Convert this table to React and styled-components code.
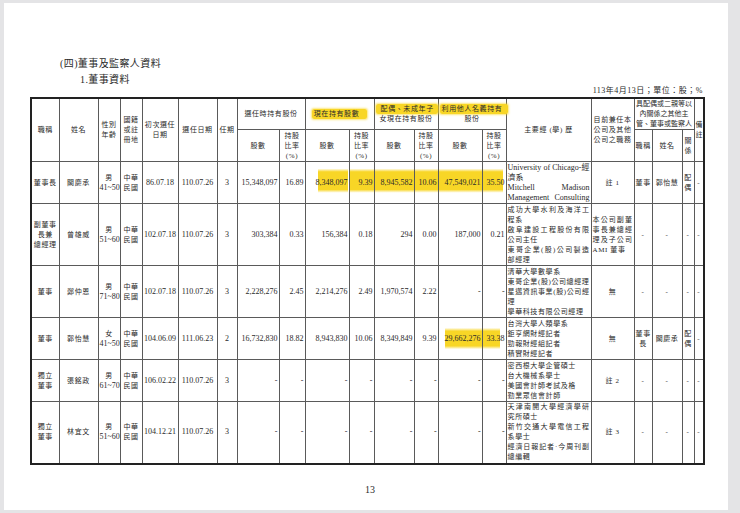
import React from "react";
import styled, { createGlobalStyle, css } from "styled-components";

const YELLOW = "#f8d626";

const GlobalStyle = createGlobalStyle`
  html, body {
    margin: 0;
    padding: 0;
    background: #e4e4e6;
  }
  body {
    font-family: "Liberation Serif", "Noto Sans CJK TC", serif;
    color: #2a2a2a;
  }
`;

const Sheet = styled.div`
  width: 724px;
  height: 507px;
  margin: 3px 0 0 4px;
  background: #fff;
  box-sizing: border-box;
  padding: 55px 0 0 26px;
  display: flex;
  flex-direction: column;
`;

const Title = styled.div`
  margin-left: 30px;
  font-size: 10px;
  line-height: 12px;
  letter-spacing: 0.4px;
`;

const SubTitle = styled(Title)`
  margin-left: 50px;
  margin-top: 4px;
`;

const DateLine = styled.div`
  width: 673px;
  text-align: right;
  font-size: 8px;
  line-height: 10px;
  letter-spacing: 0.5px;
  margin-bottom: 1px;
`;

const Table = styled.table`
  width: 673px;
  border-collapse: collapse;
  table-layout: fixed;
  border: 2px solid #222;
`;

const cellBase = css`
  border: 1px solid #5a5a5a;
  padding: 0 1px;
  font-size: 7px;
  font-weight: normal;
  letter-spacing: ${(p) => (p.$tight ? 0 : 0.6)}px;
  line-height: 10px;
  text-align: ${(p) => p.$align || "center"};
  vertical-align: middle;
  white-space: nowrap;
  overflow: visible;
`;

// highlighter band drawn as a background gradient on the cell
const hlBg = ({ $hl, $band }) => {
  if (!$hl) return "";
  const [l, r] = $hl;
  const [t, b] = $band;
  const w = r - l;
  const pos = w >= 100 ? 0 : (l / (100 - w)) * 100;
  return css`
    background-image: linear-gradient(
      to bottom,
      transparent ${t - 5}%,
      rgba(248, 214, 38, 0.5) ${t - 1}%,
      ${YELLOW} ${t + 3}%,
      ${YELLOW} ${b - 3}%,
      rgba(248, 214, 38, 0.5) ${b + 1}%,
      transparent ${b + 5}%
    );
    background-repeat: no-repeat;
    background-size: ${w}% 100%;
    background-position: ${pos}% 0;
  `;
};

const Head = styled.th`
  ${cellBase}
`;

const Cell = styled.td`
  ${cellBase}
  ${(p) =>
    p.$num &&
    css`
      font-size: 8px;
      letter-spacing: 0;
      text-align: ${p.$align || "right"};
    `}
  ${hlBg}
`;

const ExpCell = styled.td`
  ${cellBase}
  text-align: left;
`;

const Row = styled.tr`
  height: ${(p) => p.$h}px;
`;

const Line = styled.div`
  white-space: nowrap;
  ${(p) =>
    p.$just &&
    css`
      text-align: justify;
      text-align-last: justify;
    `}
  ${(p) =>
    p.$latin &&
    css`
      font-size: 8px;
      letter-spacing: 0;
    `}
`;

const Num = styled.span`
  font-size: 8px;
  letter-spacing: 0;
`;

const Mark = styled.span`
  background: ${YELLOW};
  box-shadow: 0 0 2px 1px rgba(248, 214, 38, 0.6);
  border-radius: 2px;
  padding: 1px ${(p) => p.$pr || 4}px 1px ${(p) => p.$pl || 4}px;
`;

const PageNo = styled.div`
  width: 673px;
  margin-top: 19px;
  padding-left: 7px;
  box-sizing: border-box;
  text-align: center;
  font-size: 10px;
  line-height: 12px;
`;

const widths = [28, 39, 22, 22, 36, 39, 20, 42, 26, 44, 25, 40, 24, 44, 24, 85, 43, 18, 30, 12, 10];

const rows = [
  {
    h: 42,
    title: ["董事長"],
    name: "闕慶承",
    sex: "男",
    age: "41~50",
    first: "86.07.18",
    elect: "110.07.26",
    term: "3",
    nums: ["15,348,097", "16.89", "8,348,097", "9.39", "8,945,582", "10.06", "47,549,021", "35.50"],
    band: [21, 70],
    hl: { 2: [30, 100], 3: [0, 100], 4: [0, 100], 5: [0, 100], 6: [0, 100], 7: [0, 88] },
    latin: true,
    exp: [
      ["University of Chicago-經", "濟系"],
      ["Mitchell Madison", "Management Consulting"],
    ],
    job: ["註 1"],
    rel: [["董事"], ["郭怡慧"], ["配", "偶"], ["-"]],
  },
  {
    h: 62,
    title: ["副董事", "長兼", "總經理"],
    name: "曾雄威",
    sex: "男",
    age: "51~60",
    first: "102.07.18",
    elect: "110.07.26",
    term: "3",
    nums: ["303,384", "0.33", "156,384", "0.18", "294", "0.00", "187,000", "0.21"],
    exp: [
      ["成功大學水利及海洋工", "程系"],
      ["啟阜建設工程股份有限", "公司主任"],
      ["東哥企業(股)公司製造", "部經理"],
    ],
    job: ["本公司副董", "事長兼總經", "理及子公司", "AMI 董事"],
    jobJust: true,
    rel: [["-"], ["-"], ["-"], ["-"]],
  },
  {
    h: 52,
    title: ["董事"],
    name: "鄭仲恩",
    sex: "男",
    age: "71~80",
    first: "102.07.18",
    elect: "110.07.26",
    term: "3",
    nums: ["2,228,276", "2.45", "2,214,276", "2.49", "1,970,574", "2.22", "-", "-"],
    exp: [
      ["清華大學數學系"],
      ["東哥企業(股)公司總經理"],
      ["星邁資訊事業(股)公司經", "理"],
      ["學華科技有限公司經理"],
    ],
    job: ["無"],
    rel: [["-"], ["-"], ["-"], ["-"]],
  },
  {
    h: 42,
    title: ["董事"],
    name: "郭怡慧",
    sex: "女",
    age: "41~50",
    first: "104.06.09",
    elect: "111.06.23",
    term: "2",
    nums: ["16,732,830", "18.82", "8,943,830", "10.06", "8,349,849", "9.39", "29,662,276", "33.38"],
    band: [29, 71],
    hl: { 6: [14, 100], 7: [0, 75] },
    exp: [["台灣大學人類學系"], ["鉅亨網財經記者"], ["勁報財經組記者"], ["積實財經記者"]],
    job: ["無"],
    rel: [["董事", "長"], ["闕慶承"], ["配", "偶"], ["-"]],
  },
  {
    h: 42,
    title: ["獨立", "董事"],
    name: "張銘政",
    sex: "男",
    age: "61~70",
    first: "106.02.22",
    elect: "110.07.26",
    term: "3",
    nums: ["-", "-", "-", "-", "-", "-", "-", "-"],
    exp: [["密西根大學企管碩士"], ["台大機械系學士"], ["美國會計師考試及格"], ["勤業眾信會計師"]],
    job: ["註 2"],
    rel: [["-"], ["-"], ["-"], ["-"]],
  },
  {
    h: 62,
    title: ["獨立", "董事"],
    name: "林宜文",
    sex: "男",
    age: "51~60",
    first: "104.12.21",
    elect: "110.07.26",
    term: "3",
    nums: ["-", "-", "-", "-", "-", "-", "-", "-"],
    exp: [
      ["天津南開大學經濟學研", "究所碩士"],
      ["新竹交通大學電信工程", "系學士"],
      ["經濟日報記者·今周刊副", "總編輯"],
    ],
    job: ["註 3"],
    rel: [["-"], ["-"], ["-"], ["-"]],
  },
];

const Lines = ({ lines, just }) =>
  lines.map((l, i) => (
    <Line key={i} $just={just && i < lines.length - 1}>
      {l}
    </Line>
  ));

const ShareHead = () => (
  <>
    <Head>股數</Head>
    <Head>
      <Lines lines={["持股", "比率", "(%)"]} />
    </Head>
  </>
);

const DirectorRow = ({ r }) => (
  <Row $h={r.h}>
    <Cell>
      <Lines lines={r.title} />
    </Cell>
    <Cell>{r.name}</Cell>
    <Cell>
      <Line>{r.sex}</Line>
      <Line>
        <Num>{r.age}</Num>
      </Line>
    </Cell>
    <Cell>
      <Lines lines={["中華", "民國"]} />
    </Cell>
    <Cell $num $align="center">
      {r.first}
    </Cell>
    <Cell $num $align="center">
      {r.elect}
    </Cell>
    <Cell $num $align="center">
      {r.term}
    </Cell>
    {r.nums.map((n, i) => (
      <Cell key={i} $num $hl={r.hl && r.hl[i]} $band={r.band}>
        {n}
      </Cell>
    ))}
    <ExpCell>
      {r.exp.map((p, pi) =>
        p.map((l, li) => (
          <Line key={`${pi}-${li}`} $latin={r.latin} $just={li < p.length - 1 || (r.latin && pi === 1)}>
            {l}
          </Line>
        ))
      )}
    </ExpCell>
    <Cell $align={r.jobJust ? "left" : "center"}>
      <Lines lines={r.job} just={r.jobJust} />
    </Cell>
    {r.rel.map((c, i) => (
      <Cell key={i}>
        <Lines lines={c} />
      </Cell>
    ))}
  </Row>
);

export default function App() {
  return (
    <>
      <GlobalStyle />
      <Sheet>
        <Title>(四)董事及監察人資料</Title>
        <SubTitle>1.董事資料</SubTitle>
        <DateLine>113年4月13日；單位：股；%</DateLine>
        <Table>
          <colgroup>
            {widths.map((w, i) => (
              <col key={i} style={{ width: w }} />
            ))}
          </colgroup>
          <thead>
            <Row $h={31}>
              <Head rowSpan={2}>職稱</Head>
              <Head rowSpan={2}>姓名</Head>
              <Head rowSpan={2}>
                <Lines lines={["性別", "年齡"]} />
              </Head>
              <Head rowSpan={2}>
                <Lines lines={["國籍", "或註", "冊地"]} />
              </Head>
              <Head rowSpan={2}>
                <Lines lines={["初次選任", "日期"]} />
              </Head>
              <Head rowSpan={2}>選任日期</Head>
              <Head rowSpan={2}>任期</Head>
              <Head colSpan={2}>選任時持有股份</Head>
              <Head colSpan={2}>
                <Mark $pl={2} $pr={8}>現在持有股數</Mark>
              </Head>
              <Head colSpan={2}>
                <Line>
                  <Mark $pl={5} $pr={4}>配偶、未成年子</Mark>
                </Line>
                <Line>女現在持有股份</Line>
              </Head>
              <Head colSpan={2}>
                <Line>
                  <Mark $pl={2} $pr={6}>利用他人名義持有</Mark>
                </Line>
                <Line>股份</Line>
              </Head>
              <Head rowSpan={2}>主要經 (學) 歷</Head>
              <Head rowSpan={2}>
                <Lines lines={["目前兼任本", "公司及其他", "公司之職務"]} />
              </Head>
              <Head colSpan={3} $tight>
                <Lines lines={["具配偶或二親等以", "內關係之其他主", "管、董事或監察人"]} />
              </Head>
              <Head rowSpan={2} $tight>
                <Lines lines={["備", "註"]} />
              </Head>
            </Row>
            <Row $h={32}>
              <ShareHead />
              <ShareHead />
              <ShareHead />
              <ShareHead />
              <Head>職稱</Head>
              <Head>姓名</Head>
              <Head $tight>
                <Lines lines={["關", "係"]} />
              </Head>
            </Row>
          </thead>
          <tbody>
            {rows.map((r, i) => (
              <DirectorRow key={i} r={r} />
            ))}
          </tbody>
        </Table>
        <PageNo>13</PageNo>
      </Sheet>
    </>
  );
}
